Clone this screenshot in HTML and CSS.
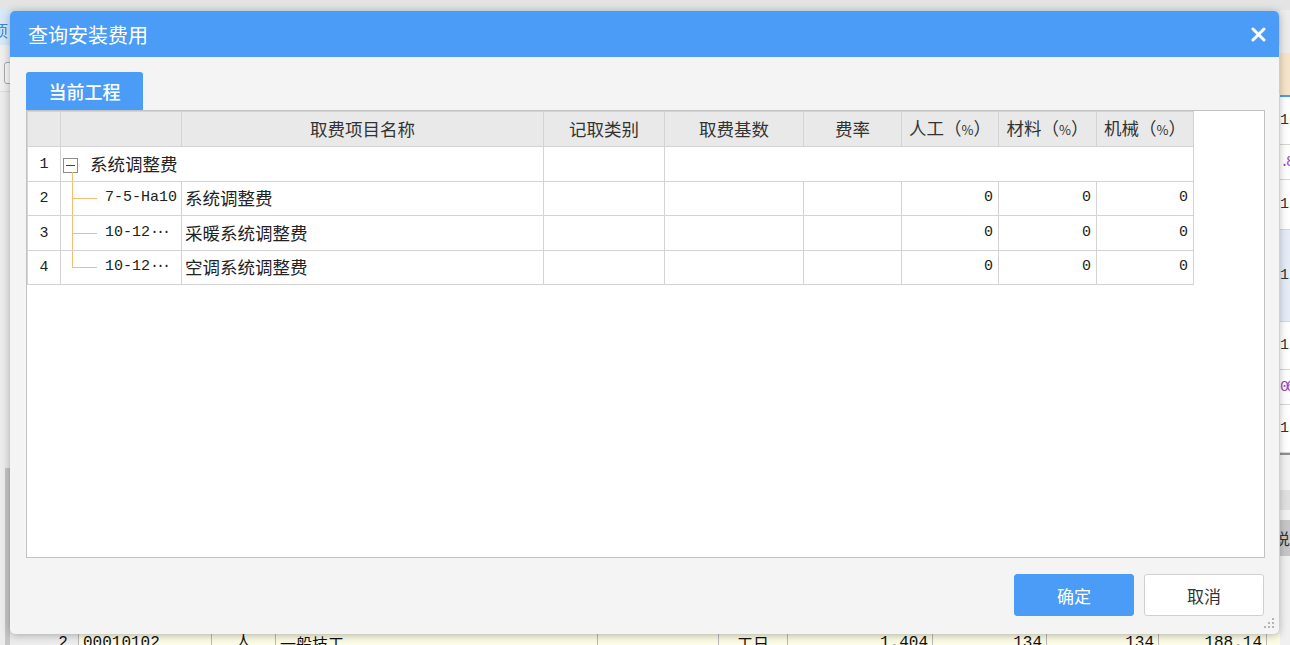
FILE: index.html
```html
<!DOCTYPE html>
<html lang="zh-CN">
<head>
    <meta charset="UTF-8">
    <meta name="viewport" content="width=device-width, initial-scale=1.0">
    <title>查询安装费用</title>
    <link rel="stylesheet" href="styles.css">
</head>
<body>
    <!-- the project window behind the dialog -->
    <div class="app">
        <div class="app-top"></div>
        <div class="app-work">
            <div class="app-left">
                <div class="app-tabs"><span class="app-tab">项</span></div>
                <div class="app-tool"><span class="tool-btn"></span></div>
                <div class="app-panel">
                    <div class="app-gutter"><div class="gutter-bar"></div></div>
                    <div class="app-grid">
                        <div class="app-blank"></div>
                        <div class="app-row">
                            <span class="c c-no">2</span>
                            <span class="c c-code">00010102</span>
                            <span class="c c-kind">人</span>
                            <span class="c c-name">一般技工</span>
                            <span class="c c-spec"></span>
                            <span class="c c-unit">工日</span>
                            <span class="c c-num c-qty">1.404</span>
                            <span class="c c-num c-p1">134</span>
                            <span class="c c-num c-p2">134</span>
                            <span class="c c-num c-sum">188.14</span>
                        </div>
                    </div>
                </div>
            </div>
            <div class="app-right">
                <div class="r r-head"></div>
                <div class="r r-peach"></div>
                <div class="r r-blue"></div>
                <div class="r r-48">16</div>
                <div class="r r-35 purple">.8</div>
                <div class="r r-50">1</div>
                <div class="r r-sel">1</div>
                <div class="r r-48">1</div>
                <div class="r r-35 purple">06</div>
                <div class="r r-48">1.</div>
                <div class="r r-dark"></div>
                <div class="r r-35 r-light"></div>
                <div class="r r-bar"></div>
                <div class="r r-gap"></div>
                <div class="r r-btn">说</div>
                <div class="r r-rest"></div>
            </div>
        </div>
    </div>

    <div class="dialog">
        <div class="dlg-head">
            <span class="dlg-title">查询安装费用</span>
            <svg class="dlg-close" width="15" height="15" viewBox="0 0 15 15">
                <path d="M2 2L13 13M13 2L2 13" stroke="#fff" stroke-width="3" stroke-linecap="round"/>
            </svg>
        </div>

        <div class="dlg-body">
            <div class="tabs"><span class="tab">当前工程</span></div>
            <div class="grid-box">
                <table class="fee-table">
                    <colgroup>
                        <col style="width:33px">
                        <col style="width:121px">
                        <col style="width:362px">
                        <col style="width:121px">
                        <col style="width:139px">
                        <col style="width:98px">
                        <col style="width:97px">
                        <col style="width:98px">
                        <col style="width:97px">
                    </colgroup>
                    <thead>
                        <tr>
                            <th></th>
                            <th></th>
                            <th>取费项目名称</th>
                            <th>记取类别</th>
                            <th>取费基数</th>
                            <th>费率</th>
                            <th>人工（<small>%</small>）</th>
                            <th>材料（<small>%</small>）</th>
                            <th>机械（<small>%</small>）</th>
                        </tr>
                    </thead>
                    <tbody>
                        <tr>
                            <td class="no">1</td>
                            <td class="root" colspan="2"><span class="fold"></span>系统调整费</td>
                            <td></td>
                            <td colspan="5"></td>
                        </tr>
                        <tr>
                            <td class="no">2</td>
                            <td class="leaf">7-5-Ha10</td>
                            <td class="name">系统调整费</td>
                            <td></td>
                            <td></td>
                            <td></td>
                            <td class="val">0</td>
                            <td class="val">0</td>
                            <td class="val">0</td>
                        </tr>
                        <tr>
                            <td class="no">3</td>
                            <td class="leaf">10-12<span class="more">···</span></td>
                            <td class="name">采暖系统调整费</td>
                            <td></td>
                            <td></td>
                            <td></td>
                            <td class="val">0</td>
                            <td class="val">0</td>
                            <td class="val">0</td>
                        </tr>
                        <tr>
                            <td class="no">4</td>
                            <td class="leaf last">10-12<span class="more">···</span></td>
                            <td class="name">空调系统调整费</td>
                            <td></td>
                            <td></td>
                            <td></td>
                            <td class="val">0</td>
                            <td class="val">0</td>
                            <td class="val">0</td>
                        </tr>
                    </tbody>
                </table>
            </div>
        </div>

        <div class="dlg-foot">
            <button class="btn btn-primary">确定</button>
            <button class="btn">取消</button>
        </div>

        <svg class="grip" width="12" height="12" viewBox="0 0 12 12">
            <rect x="9" y="1" width="2" height="2" fill="#b4b4b4"/>
            <rect x="5" y="5" width="2" height="2" fill="#b4b4b4"/>
            <rect x="9" y="5" width="2" height="2" fill="#b4b4b4"/>
            <rect x="1" y="9" width="2" height="2" fill="#b4b4b4"/>
            <rect x="5" y="9" width="2" height="2" fill="#b4b4b4"/>
            <rect x="9" y="9" width="2" height="2" fill="#b4b4b4"/>
        </svg>
    </div>
</body>
</html>
```

FILE: styles.css
```css
body {
    margin: 0;
    padding: 0;
    height: 645px;
    overflow: hidden;
    position: relative;
    font-family: "Noto Sans CJK SC", "Liberation Sans", sans-serif;
    color: #222;
    background: #efefef;
}

/* ---------- background window ---------- */
.app {
    height: 645px;
    display: flex;
    flex-direction: column;
}
.app-top {
    height: 10px;
    background: #e4e4e4;
    flex: none;
}
.app-work {
    flex: 1;
    display: flex;
    min-height: 0;
}
.app-left {
    flex: 1;
    display: flex;
    flex-direction: column;
    min-width: 0;
}
.app-tabs {
    height: 35px;
    flex: none;
    background: #d6e8f9;
    overflow: hidden;
    white-space: nowrap;
}
.app-tab {
    display: inline-block;
    margin-left: -8px;
    padding-top: 6px;
    height: 29px;
    line-height: 29px;
    font-size: 16px;
    color: #3a86d8;
}
.app-tool {
    height: 47px;
    flex: none;
    box-sizing: border-box;
    background: #efefef;
    border-bottom: 1px solid #dcdcdc;
    padding-top: 17px;
}
.tool-btn {
    display: block;
    margin-left: 4px;
    width: 14px;
    height: 20px;
    border: 1px solid #a8a8a8;
    border-radius: 3px;
    background: #f8f8f8;
}
.app-panel {
    flex: 1;
    display: flex;
    min-height: 0;
}
.app-gutter {
    width: 48px;
    flex: none;
    display: flex;
    flex-direction: column;
    background: #ececec;
}
.gutter-bar {
    margin-top: auto;
    margin-left: 5px;
    width: 5px;
    height: 177px;
    background: #c6c6c6;
}
.app-grid {
    flex: 1;
    display: flex;
    flex-direction: column;
    min-width: 0;
}
.app-blank {
    flex: 1;
    background: #f3f3f3;
}
.app-row {
    height: 11px;
    flex: none;
    overflow: hidden;
    display: flex;
    background: #fbfbe6;
    font-family: "Liberation Mono", "Noto Sans CJK SC", monospace;
    font-size: 16px;
    line-height: 18px;
    color: #111;
}
.c {
    flex: none;
    box-sizing: border-box;
    border-right: 1px solid #b8b8b8;
    padding: 0 4px;
    white-space: nowrap;
}
.c-no { width: 31px; text-align: center; background: #ededed; }
.c-code { width: 133px; }
.c-kind { width: 64px; text-align: center; }
.c-name { width: 322px; font-family: "Noto Sans CJK SC", sans-serif; }
.c-spec { width: 121px; }
.c-unit { width: 69px; text-align: center; font-family: "Noto Sans CJK SC", sans-serif; }
.c-num { text-align: right; }
.c-qty { width: 145px; }
.c-p1 { width: 114px; }
.c-p2 { width: 112px; }
.c-sum { width: 108px; }

.app-right {
    width: 10px;
    flex: none;
    display: flex;
    flex-direction: column;
    overflow: hidden;
    background: #f2f2f2;
    font-family: "Liberation Mono", monospace;
    font-size: 15px;
    color: #333;
}
.r {
    flex: none;
    box-sizing: border-box;
    display: flex;
    align-items: center;
    white-space: nowrap;
    background: #fff;
    border-bottom: 1px solid #d6d6d6;
}
.r-head { height: 43px; background: #ececec; border: none; }
.r-peach { height: 42px; background: #f6e3c8; border: none; }
.r-blue { height: 2px; background: #4a9cf7; border: none; }
.r-48 { height: 48px; }
.r-35 { height: 35px; }
.r-50 { height: 50px; }
.r-sel { height: 92px; background: #e5ecf7; }
.purple { color: #a63fc7; letter-spacing: -3px; }
.r-dark { height: 2px; background: #8f8f8f; border: none; }
.r-light { background: #f2f2f2; border: none; }
.r-bar { height: 20px; background: #e0e0e0; border: none; }
.r-gap { height: 10px; background: #f2f2f2; border: none; }
.r-btn {
    height: 36px;
    background: #c6c6c6;
    border: none;
    font-family: "Noto Sans CJK SC", sans-serif;
    font-size: 16px;
    margin-left: -6px;
}
.r-rest { flex: 1; background: #f0f0f0; border: none; }

/* ---------- dialog ---------- */
.dialog {
    position: absolute;
    left: 10px;
    top: 11px;
    width: 1269px;
    height: 623px;
    display: flex;
    flex-direction: column;
    background: #f4f4f4;
    border-radius: 5px;
    box-shadow: 0 1px 8px rgba(0, 0, 0, 0.3);
    overflow: hidden;
}
.dlg-head {
    height: 46px;
    flex: none;
    display: flex;
    align-items: center;
    justify-content: space-between;
    padding: 1px 13px 0 18px;
    box-sizing: border-box;
    background: #4a9cf7;
}
.dlg-title {
    font-size: 20px;
    line-height: 1;
    color: #fff;
}
.dlg-close {
    display: block;
}
.dlg-body {
    padding: 15px 14px 0 16px;
    display: flex;
    flex-direction: column;
}
.tabs {
    height: 38px;
    display: flex;
}
.tab {
    width: 117px;
    text-align: center;
    line-height: 38px;
    font-size: 18px;
    font-weight: 500;
    color: #fff;
    background: #4a9cf7;
    border-radius: 3px 3px 0 0;
}
.grid-box {
    height: 448px;
    box-sizing: border-box;
    border: 1px solid #c2c2c2;
    background: #fff;
}

.fee-table {
    table-layout: fixed;
    border-collapse: collapse;
    width: 1166px;
    font-size: 17.5px;
    color: #222;
}
.fee-table th,
.fee-table td {
    border: 1px solid #d3d3d3;
    padding: 0 3px;
    white-space: nowrap;
    overflow: hidden;
    line-height: 20px;
}
.fee-table thead tr {
    height: 35px;
}
.fee-table tbody tr {
    height: 34.5px;
}
.fee-table th {
    background: #e9e9e9;
    font-weight: normal;
    color: #333;
    text-align: center;
}
.fee-table th small {
    font-size: 13px;
}
.fee-table td.no {
    text-align: center;
    padding: 2px 0 0;
    font-family: "Liberation Mono", monospace;
    font-size: 15px;
}
.fee-table td.val {
    text-align: right;
    padding-right: 5px;
    font-family: "Liberation Mono", monospace;
    font-size: 15px;
}

/* tree column */
.fee-table td.root {
    position: relative;
    padding-left: 2px;
}
.fold {
    display: inline-block;
    vertical-align: middle;
    position: relative;
    top: -1px;
    width: 13px;
    height: 13px;
    margin-right: 12px;
    border: 1px solid #8c8c8c;
    background: #fff;
}
.fold::after {
    content: '';
    position: absolute;
    left: 2px;
    top: 6px;
    width: 9px;
    border-top: 1px solid #444;
}
.fee-table td.root::after {
    content: '';
    position: absolute;
    left: 11px;
    top: 25px;
    bottom: -1px;
    border-left: 1px solid #f4bd72;
}
.fee-table td.leaf {
    position: relative;
    padding-left: 44px;
    font-family: "Liberation Mono", monospace;
    font-size: 15px;
}
.fee-table td.leaf::before {
    content: '';
    position: absolute;
    left: 11px;
    top: 0;
    bottom: 0;
    border-left: 1px solid #f4bd72;
}
.fee-table td.leaf.last::before {
    bottom: 50%;
}
.fee-table td.leaf::after {
    content: '';
    position: absolute;
    left: 11px;
    top: 50%;
    width: 25px;
    border-top: 1px solid #f4bd72;
}
.more {
    letter-spacing: -3px;
}

/* ---------- footer ---------- */
.dlg-foot {
    margin-top: auto;
    display: flex;
    justify-content: flex-end;
    gap: 10px;
    padding: 0 15px 18px 0;
}
.btn {
    width: 120px;
    height: 42px;
    box-sizing: border-box;
    border: 1px solid #d0d0d0;
    border-radius: 3px;
    background: #fff;
    color: #333;
    font-family: "Noto Sans CJK SC", sans-serif;
    font-size: 17px;
    cursor: pointer;
}
.btn-primary {
    border-color: #4a9cf7;
    background: #4a9cf7;
    color: #fff;
}
.grip {
    position: absolute;
    right: 4px;
    bottom: 5px;
}
```
